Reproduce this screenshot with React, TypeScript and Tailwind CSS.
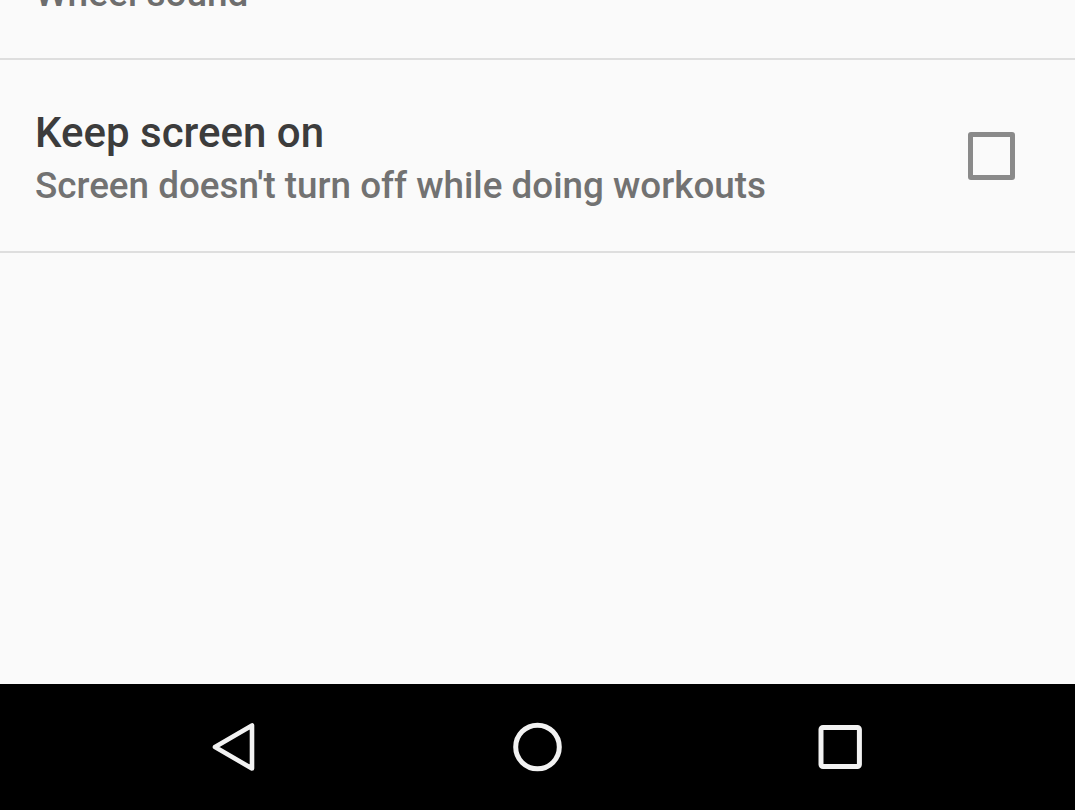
import React from "react";

export default function App() {
  return (
    <div
      className="h-screen w-full flex flex-col bg-[#fafafa] overflow-hidden"
      style={{ fontFamily: "Roboto, 'Noto Sans', sans-serif" }}
    >
      {/* partially visible row */}
      <div className="h-[58px] shrink-0 overflow-hidden pl-[35px]">
        <div className="mt-[-31px] text-[37px] leading-[50px] font-medium text-[#6e6e6e]">Wheel sound</div>
      </div>
      <div className="h-[2px] shrink-0 bg-[#dedede]" />

      {/* keep screen on */}
      <div className="flex shrink-0 items-center h-[191px] pl-[35px] pr-[60px]">
        <div className="flex-1 flex flex-col pt-[8px]">
          <div className="text-[42px] leading-[50px] font-medium text-[#3c3c3c]">Keep screen on</div>
          <div className="mt-[3px] text-[36.8px] leading-[50px] font-medium text-[#727272]">
            Screen doesn't turn off while doing workouts
          </div>
        </div>
        <div className="w-[47px] h-[48px] border-[5px] border-[#8a8a8a] rounded-[3px]" />
      </div>
      <div className="h-[2px] shrink-0 bg-[#dedede]" />

      <div className="flex-1" />

      {/* nav bar */}
      <div className="h-[126px] shrink-0 bg-black flex items-center justify-center gap-[223px]">
        <div className="w-[80px] h-[80px]">
          <svg viewBox="0 0 80 80" width="80" height="80">
            <polygon
              points="20,40 57,18.5 57,61.5"
              fill="none"
              stroke="#f2f2f2"
              strokeWidth="4.6"
              strokeLinejoin="round"
            />
          </svg>
        </div>
        <div className="w-[80px] h-[80px]">
          <svg viewBox="0 0 80 80" width="80" height="80">
            <circle cx="39.5" cy="40" r="21.8" fill="none" stroke="#f2f2f2" strokeWidth="5" />
          </svg>
        </div>
        <div className="w-[80px] h-[80px]">
          <svg viewBox="0 0 80 80" width="80" height="80">
            <rect x="20" y="20.5" width="38.4" height="39" rx="2" fill="none" stroke="#f2f2f2" strokeWidth="5" />
          </svg>
        </div>
      </div>
    </div>
  );
}
